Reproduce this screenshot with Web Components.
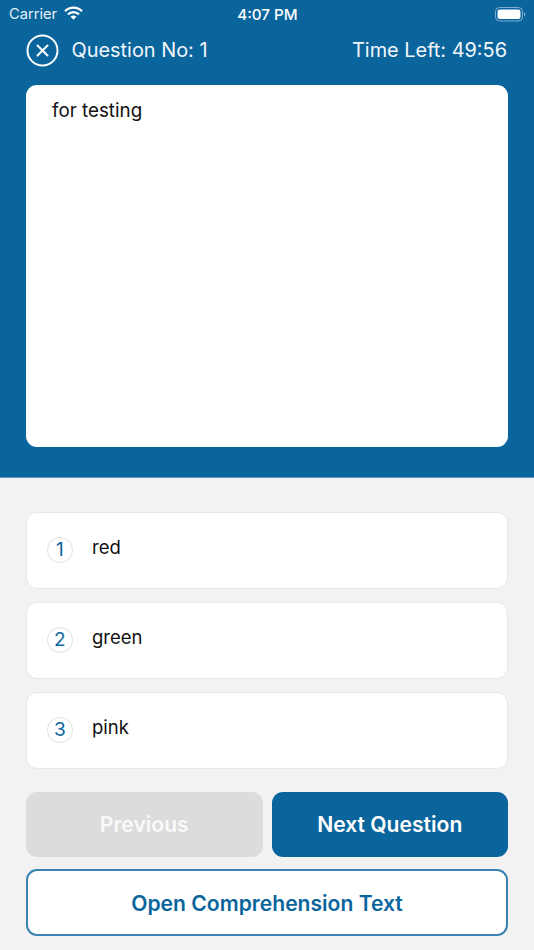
<!DOCTYPE html>
<html>
<head>
<meta charset="utf-8">
<title>Quiz</title>
<style>
  html, body { margin: 0; padding: 0; background: #f2f2f3; }
  body { font-family: Inter, "Liberation Sans", sans-serif; width: 534px; height: 950px; overflow: hidden; }
</style>
</head>
<body>
<quiz-app>
  <status-bar carrier="Carrier" time="4:07 PM"></status-bar>
  <quiz-header number="1" time="49:56"></quiz-header>
  <question-card>for testing</question-card>
</quiz-app>
<script>
class QuizApp extends HTMLElement {
    constructor() {
        super();
        this.attachShadow({ mode: 'open' });
        this.shadowRoot.innerHTML = `
            <style>
                :host { display: block; }
                .top {
                    background: #0a659d;
                    height: 478px;
                    box-sizing: border-box;
                    border-bottom: 1px solid #5d97bb;
                    display: flex;
                    flex-direction: column;
                }
                .bottom {
                    padding: 34px 26px 0;
                    display: flex;
                    flex-direction: column;
                }
                .options { display: flex; flex-direction: column; gap: 13.5px; }
                .row { display: flex; gap: 9px; margin-top: 23px; }
                .row > * { flex: 1; }
                .wide { display: block; margin-top: 12px; }
            </style>
            <div class="top"><slot></slot></div>
            <div class="bottom">
                <div class="options">
                    <option-row n="1">red</option-row>
                    <option-row n="2">green</option-row>
                    <option-row n="3">pink</option-row>
                </div>
                <div class="row">
                    <quiz-button kind="disabled">Previous</quiz-button>
                    <quiz-button kind="primary">Next Question</quiz-button>
                </div>
                <quiz-button class="wide" kind="outline">Open Comprehension Text</quiz-button>
            </div>
        `;
    }
}

class StatusBar extends HTMLElement {
    constructor() {
        super();
        this.attachShadow({ mode: 'open' });
        this.shadowRoot.innerHTML = `
            <style>
                :host {
                    display: grid;
                    grid-template-columns: 1fr auto 1fr;
                    align-items: center;
                    height: 28px;
                    padding: 0 8px 0 9px;
                    color: #fff;
                }
                .left { display: flex; align-items: center; gap: 7px; color: #e4eef5; font-size: 14.7px; }
                .time { font-weight: 500; font-size: 15.2px; }
                .right { display: flex; justify-content: flex-end; }
                svg { display: block; }
            </style>
            <div class="left">
                <span>${this.getAttribute('carrier')}</span>
                <svg width="19" height="14" viewBox="0 0 19 14" style="margin-top:-3px">
                    <path d="M1 5.2a12 12 0 0 1 17 0" fill="none" stroke="#fff" stroke-width="2.2"/>
                    <path d="M4 8.4a7.8 7.8 0 0 1 11 0" fill="none" stroke="#fff" stroke-width="2.2"/>
                    <path d="M6.6 10.8a4 4 0 0 1 5.8 0L9.5 13.8z" fill="#fff"/>
                </svg>
            </div>
            <div class="time">${this.getAttribute('time')}</div>
            <div class="right">
                <svg width="31" height="15" viewBox="0 0 31 15">
                    <rect x="0.5" y="0.5" width="27" height="13.5" rx="4" fill="none" stroke="#7fafcd"/>
                    <rect x="2.5" y="2.5" width="23" height="9.5" rx="2.2" fill="#fff"/>
                    <path d="M29 5.2c1 .3 1.4 1.1 1.4 2s-.4 1.7-1.4 2z" fill="#7fafcd"/>
                </svg>
            </div>
        `;
    }
}

class QuizHeader extends HTMLElement {
    constructor() {
        super();
        this.attachShadow({ mode: 'open' });
        this.shadowRoot.innerHTML = `
            <style>
                :host {
                    display: flex;
                    align-items: center;
                    height: 44px;
                    padding: 0 27px 0 26px;
                    color: #f1f6fa;
                    font-size: 19.9px;
                }
                svg { display: block; margin-right: 12.5px; }
                .time { margin-left: auto; }
            </style>
            <svg width="33" height="33" viewBox="0 0 33 33">
                <circle cx="16.5" cy="16.5" r="15" fill="none" stroke="#fff" stroke-width="2"/>
                <path d="M11.5 11.5l10 10M21.5 11.5l-10 10" fill="none" stroke="#fff" stroke-width="2" stroke-linecap="round"/>
            </svg>
            <span>Question No: ${this.getAttribute('number')}</span>
            <span class="time">Time Left: ${this.getAttribute('time')}</span>
        `;
    }
}

class QuestionCard extends HTMLElement {
    constructor() {
        super();
        this.attachShadow({ mode: 'open' });
        this.shadowRoot.innerHTML = `
            <style>
                :host {
                    display: block;
                    box-sizing: border-box;
                    margin: 13px 26px 0;
                    height: 362px;
                    padding: 14px 26px;
                    background: #fff;
                    border-radius: 11px;
                    color: #111;
                    font-size: 18.8px;
                    line-height: 24px;
                }
            </style>
            <slot></slot>
        `;
    }
}

class OptionRow extends HTMLElement {
    constructor() {
        super();
        this.attachShadow({ mode: 'open' });
        this.shadowRoot.innerHTML = `
            <style>
                :host {
                    display: flex;
                    box-sizing: border-box;
                    height: 76.5px;
                    padding: 0 20px;
                    background: #fff;
                    border: 1px solid #e8e8e9;
                    border-radius: 11px;
                    color: #111;
                    font-size: 18.5px;
                }
                .num {
                    box-sizing: border-box;
                    flex: none;
                    width: 25.5px;
                    height: 25.5px;
                    margin-top: 24px;
                    border: 1px solid #e0e0e2;
                    border-radius: 50%;
                    color: #0a659d;
                    font-size: 19px;
                    display: flex;
                    align-items: center;
                    justify-content: center;
                }
                .label { margin: 21.5px 0 0 19.5px; line-height: 24px; }
            </style>
            <div class="num">${this.getAttribute('n')}</div>
            <div class="label"><slot></slot></div>
        `;
    }
}

class QuizButton extends HTMLElement {
    constructor() {
        super();
        this.attachShadow({ mode: 'open' });
        const kind = this.getAttribute('kind');
        const skins = {
            disabled: 'background:#dcdcdc;color:#f9f9f9;height:65px;',
            primary: 'background:#0a659d;color:#fff;height:65px;',
            outline: 'background:#fff;color:#0a659d;height:67px;padding-top:2px;border:2px solid #3a82b0;'
        };
        this.shadowRoot.innerHTML = `
            <style>
                :host { display: block; }
                .btn {
                    box-sizing: border-box;
                    display: flex;
                    align-items: center;
                    justify-content: center;
                    border-radius: 11px;
                    font-size: 21.1px;
                    font-weight: 600;
                    ${skins[kind]}
                }
            </style>
            <div class="btn"><slot></slot></div>
        `;
    }
}

customElements.define('quiz-app', QuizApp);
customElements.define('status-bar', StatusBar);
customElements.define('quiz-header', QuizHeader);
customElements.define('question-card', QuestionCard);
customElements.define('option-row', OptionRow);
customElements.define('quiz-button', QuizButton);
</script>
</body>
</html>
